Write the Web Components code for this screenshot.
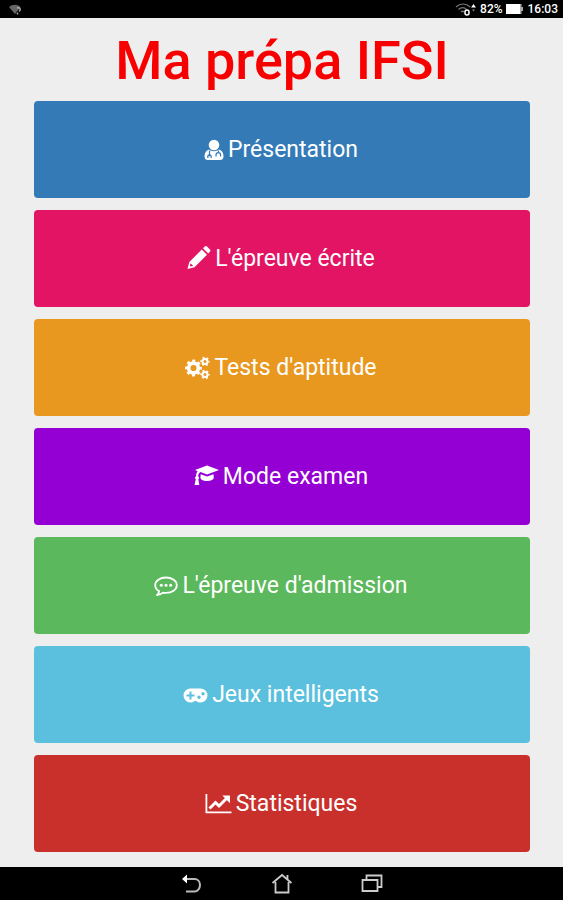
<!DOCTYPE html>
<html lang="fr">
<head>
<meta charset="utf-8">
<meta name="viewport" content="width=device-width, initial-scale=1">
<title>Ma prépa IFSI</title>
<style>
  body {
    margin: 0;
    background: #eee;
    font-family: Roboto, "Liberation Sans", sans-serif;
  }
</style>
</head>
<body>
<prepa-app></prepa-app>

<script>
// [width, height, shape], drawn in the text color of the parent
const ICONS = {
  doctor: [20, 22, `
    <circle cx="10" cy="6" r="5.300"/>
    <path fill-rule="evenodd" d="M5 10.500c-3 .8-4.500 3.500-4.500 7C.5 20 2 21 4 21h12c2 0 3.500-1 3.500-3.500 0-3.500-1.500-6.200-4.500-7-1.400 1.100-3 1.700-5 1.700s-3.600-.6-5-1.700z"/>
    <g fill="none" stroke="var(--tile)" stroke-width="1.200">
      <path d="M5.500 11.500v4.500M3.800 19v-1.500a1.700 1.700 0 0 1 3.400 0V19"/>
      <path d="M14.500 11.500v2.500M12 17.500V16a2.300 2.300 0 0 1 4.600 0v1.500"/>
    </g>
    <circle cx="5.500" cy="16.500" r="1" fill="var(--tile)"/>`],
  pencil: [24, 28, `
    <path fill-rule="evenodd" d="M.5 24l1.800-7L14.800 4.500l5.200 5.200L7.500 22.200zM3.400 18.800l-.5 2 .8.800 2-.5.400-.4-2.300-2.300z"/>
    <path d="M16 3.300l1.700-1.700c.7-.7 1.600-.7 2.300 0l2.900 2.900c.7.7.7 1.600 0 2.300l-1.700 1.700z"/>`],
  gears: [25, 24, `
    <g fill="none" stroke="currentColor">
      <circle cx="8.500" cy="12" r="4.900" stroke-width="3.600"/>
      <circle cx="8.500" cy="12" r="7.200" stroke-width="2.400" stroke-dasharray="2.900 2.755" stroke-dashoffset="1.450"/>
      <circle cx="20" cy="5.500" r="2.500" stroke-width="2"/>
      <circle cx="20" cy="5.500" r="3.900" stroke-width="1.600" stroke-dasharray="2 2.084" stroke-dashoffset="1"/>
      <circle cx="20" cy="18.500" r="2.500" stroke-width="2"/>
      <circle cx="20" cy="18.500" r="3.900" stroke-width="1.600" stroke-dasharray="2 2.084" stroke-dashoffset="1"/>
    </g>`],
  cap: [25, 28, `
    <path d="M13 2.500L25 7 13 11.500 6.500 9c-1.600.8-2.300 2.300-2.400 4.300.7.400 1 .9 1 1.500s-.3 1.100-.8 1.500L5.300 22H.5l1.300-5.700c-.5-.4-.8-.9-.8-1.500s.3-1.200 1-1.500c.1-2 .6-3.700 1.600-5L1 7z"/>
    <path d="M6.700 11.200l6.300 2.400 6.500-2.400.3 3.300c0 2-3 3.500-6.800 3.500s-6.600-1.500-6.600-3.500z"/>`],
  comment: [24, 22, `
    <path fill="none" stroke="currentColor" stroke-width="1.800" stroke-linejoin="round" d="M12 2.500C6 2.500 1.200 5.900 1.200 10.200c0 2.500 1.500 4.600 4 6-.2 1.500-1 2.800-2.200 4 2.500-.4 4.500-1.300 6-2.600 1 .2 2 .3 3 .3 6 0 10.800-3.400 10.800-7.700S18 2.500 12 2.500z"/>
    <circle cx="7.300" cy="10.200" r="1.500"/><circle cx="12" cy="10.200" r="1.500"/><circle cx="16.700" cy="10.200" r="1.500"/>`],
  gamepad: [25, 22, `
    <path fill-rule="evenodd" d="M7.500 4.500h10a7 7 0 0 1 0 14c-1.600 0-3-.5-4.200-1.500h-1.600a6.500 6.500 0 0 1-4.200 1.500 7 7 0 0 1 0-14zM6.500 7.500v3h-3v2h3v3h2v-3h3v-2h-3v-3zM16 11.500a1.700 1.700 0 1 0 0 3.400 1.700 1.700 0 0 0 0-3.400zM20 8a1.700 1.700 0 1 0 0 3.400A1.700 1.700 0 0 0 20 8z"/>`],
  chart: [27, 22, `
    <path d="M.5 1h1.800v17.500h24.200v1.800H.5z"/>
    <path fill="none" stroke="currentColor" stroke-width="3" d="M4.500 15.500l6-6 3.500 3.500 7.500-7.500"/>
    <path d="M17.300 2.500H25v7.700z"/>`],
  signal: [14, 12, `
    <path fill="#666" d="M1 4c3.500-3 8-3 11.500 0L7 11z"/>
    <path fill="none" stroke="#aaa" stroke-width="1.500" d="M9 5c3-1 4.500 1.500 2 3.500M9.500 9.500v2"/>`],
  wifi: [22, 14, `
    <g fill="none" stroke="#777" stroke-width="1.200">
      <path d="M1 5c4-4 10-4 14 0M3.500 7.500c2.500-2.500 6-2.500 8 0M6 10c1-1 2-1 3 0"/>
    </g>
    <rect x="10" y="8" width="4" height="5" rx="2" fill="#000" stroke="#fff" stroke-width="1.500"/>
    <path d="M16 5.500L18.500 2 21 5.500z"/>
    <path fill="#888" d="M17 7.500h3l-1.500 2z"/>`],
  battery: [17, 12, `
    <path d="M0 1h14v10H0z"/><path fill="#aaa" d="M14 1h1.500v3H17v4h-1.500v3H14z"/>`],
  back: [20, 22, `
    <path fill="none" stroke="#bbb" stroke-width="2" d="M3 6h9.500c3 0 5.500 2.300 5.500 6s-2.500 6.500-5.500 6.500H4"/>
    <path d="M0 6l5-4.500v9z"/>`],
  home: [22, 22, `
    <path fill="none" stroke="#ccc" stroke-width="1.800" d="M1.500 10L11 2l9.500 8M4.500 9v10.500h13V9M16.500 6V2"/>`],
  recent: [22, 22, `
    <path fill="none" stroke="#ccc" stroke-width="1.800" d="M1.500 7h15v11h-15zM5.500 6.500v-4h15v11.500h-3.500"/>`]
};

class AppIcon extends HTMLElement {
  connectedCallback() {
    const [w, h, shape] = ICONS[this.getAttribute("name")];
    this.attachShadow({ mode: "open" }).innerHTML = `
      <style>
        :host { display: block; flex: none; }
        svg { display: block; }
      </style>
      <svg width="${w}" height="${h}" viewBox="0 0 ${w} ${h}" fill="currentColor" aria-hidden="true">${shape}</svg>
    `;
  }
}
customElements.define("app-icon", AppIcon);

class StatusBar extends HTMLElement {
  connectedCallback() {
    this.attachShadow({ mode: "open" }).innerHTML = `
      <style>
        :host {
          display: flex;
          align-items: center;
          justify-content: space-between;
          height: 18px;
          padding: 0 5px 0 8px;
          background: #000;
          color: #fff;
          font-size: 12px;
          font-weight: 500;
          line-height: 18px;
        }
        .info {
          display: flex;
          align-items: center;
          gap: 3px;
        }
        time { margin-left: 2px; }
      </style>
      <app-icon name="signal"></app-icon>
      <div class="info">
        <app-icon name="wifi"></app-icon>
        <span>82%</span>
        <app-icon name="battery"></app-icon>
        <time>16:03</time>
      </div>
    `;
  }
}
customElements.define("status-bar", StatusBar);

class MenuTile extends HTMLElement {
  connectedCallback() {
    this.attachShadow({ mode: "open" }).innerHTML = `
      <style>
        :host { display: grid; }
        button {
          display: flex;
          align-items: center;
          justify-content: center;
          gap: 4px;
          min-height: 97px;
          padding: 0 14px 0 12px;
          border: 0;
          border-radius: 4px;
          background: var(--tile);
          color: #fff;
          font: inherit;
          font-size: 23px;
          line-height: 32px;
          cursor: pointer;
        }
        button:active { filter: brightness(0.9); }
      </style>
      <button type="button">
        <app-icon name="${this.getAttribute("icon")}"></app-icon>
        <span><slot></slot></span>
      </button>
    `;
  }
}
customElements.define("menu-tile", MenuTile);

class NavBar extends HTMLElement {
  connectedCallback() {
    this.attachShadow({ mode: "open" }).innerHTML = `
      <style>
        :host {
          display: flex;
          justify-content: center;
          gap: 50px;
          height: 33px;
          background: #000;
        }
        button {
          display: flex;
          align-items: center;
          justify-content: center;
          width: 40px;
          padding: 0;
          border: 0;
          background: none;
          color: #fff;
          cursor: pointer;
        }
      </style>
      <button type="button" aria-label="Retour"><app-icon name="back"></app-icon></button>
      <button type="button" aria-label="Accueil"><app-icon name="home"></app-icon></button>
      <button type="button" aria-label="Applications"><app-icon name="recent"></app-icon></button>
    `;
  }
}
customElements.define("nav-bar", NavBar);

class PrepaApp extends HTMLElement {
  connectedCallback() {
    this.attachShadow({ mode: "open" }).innerHTML = `
      <style>
        :host {
          display: flex;
          flex-direction: column;
          min-height: 100vh;
        }
        main {
          flex: 1;
          padding: 11px 33px 15px 34px;
        }
        h1 {
          margin: 0 0 8px;
          color: #f80000;
          font-size: 54px;
          font-weight: 500;
          line-height: 64px;
          text-align: center;
        }
        nav {
          display: grid;
          gap: 12px;
        }
      </style>
      <status-bar></status-bar>
      <main>
        <h1>Ma prépa IFSI</h1>
        <nav>
          <menu-tile icon="doctor" style="--tile: #337ab7">Présentation</menu-tile>
          <menu-tile icon="pencil" style="--tile: #e31463">L'épreuve écrite</menu-tile>
          <menu-tile icon="gears" style="--tile: #e9981f">Tests d'aptitude</menu-tile>
          <menu-tile icon="cap" style="--tile: #9400d3">Mode examen</menu-tile>
          <menu-tile icon="comment" style="--tile: #5cb85c">L'épreuve d'admission</menu-tile>
          <menu-tile icon="gamepad" style="--tile: #5bc0de">Jeux intelligents</menu-tile>
          <menu-tile icon="chart" style="--tile: #c9302c">Statistiques</menu-tile>
        </nav>
      </main>
      <nav-bar></nav-bar>
    `;
  }
}
customElements.define("prepa-app", PrepaApp);
</script>
</body>
</html>
